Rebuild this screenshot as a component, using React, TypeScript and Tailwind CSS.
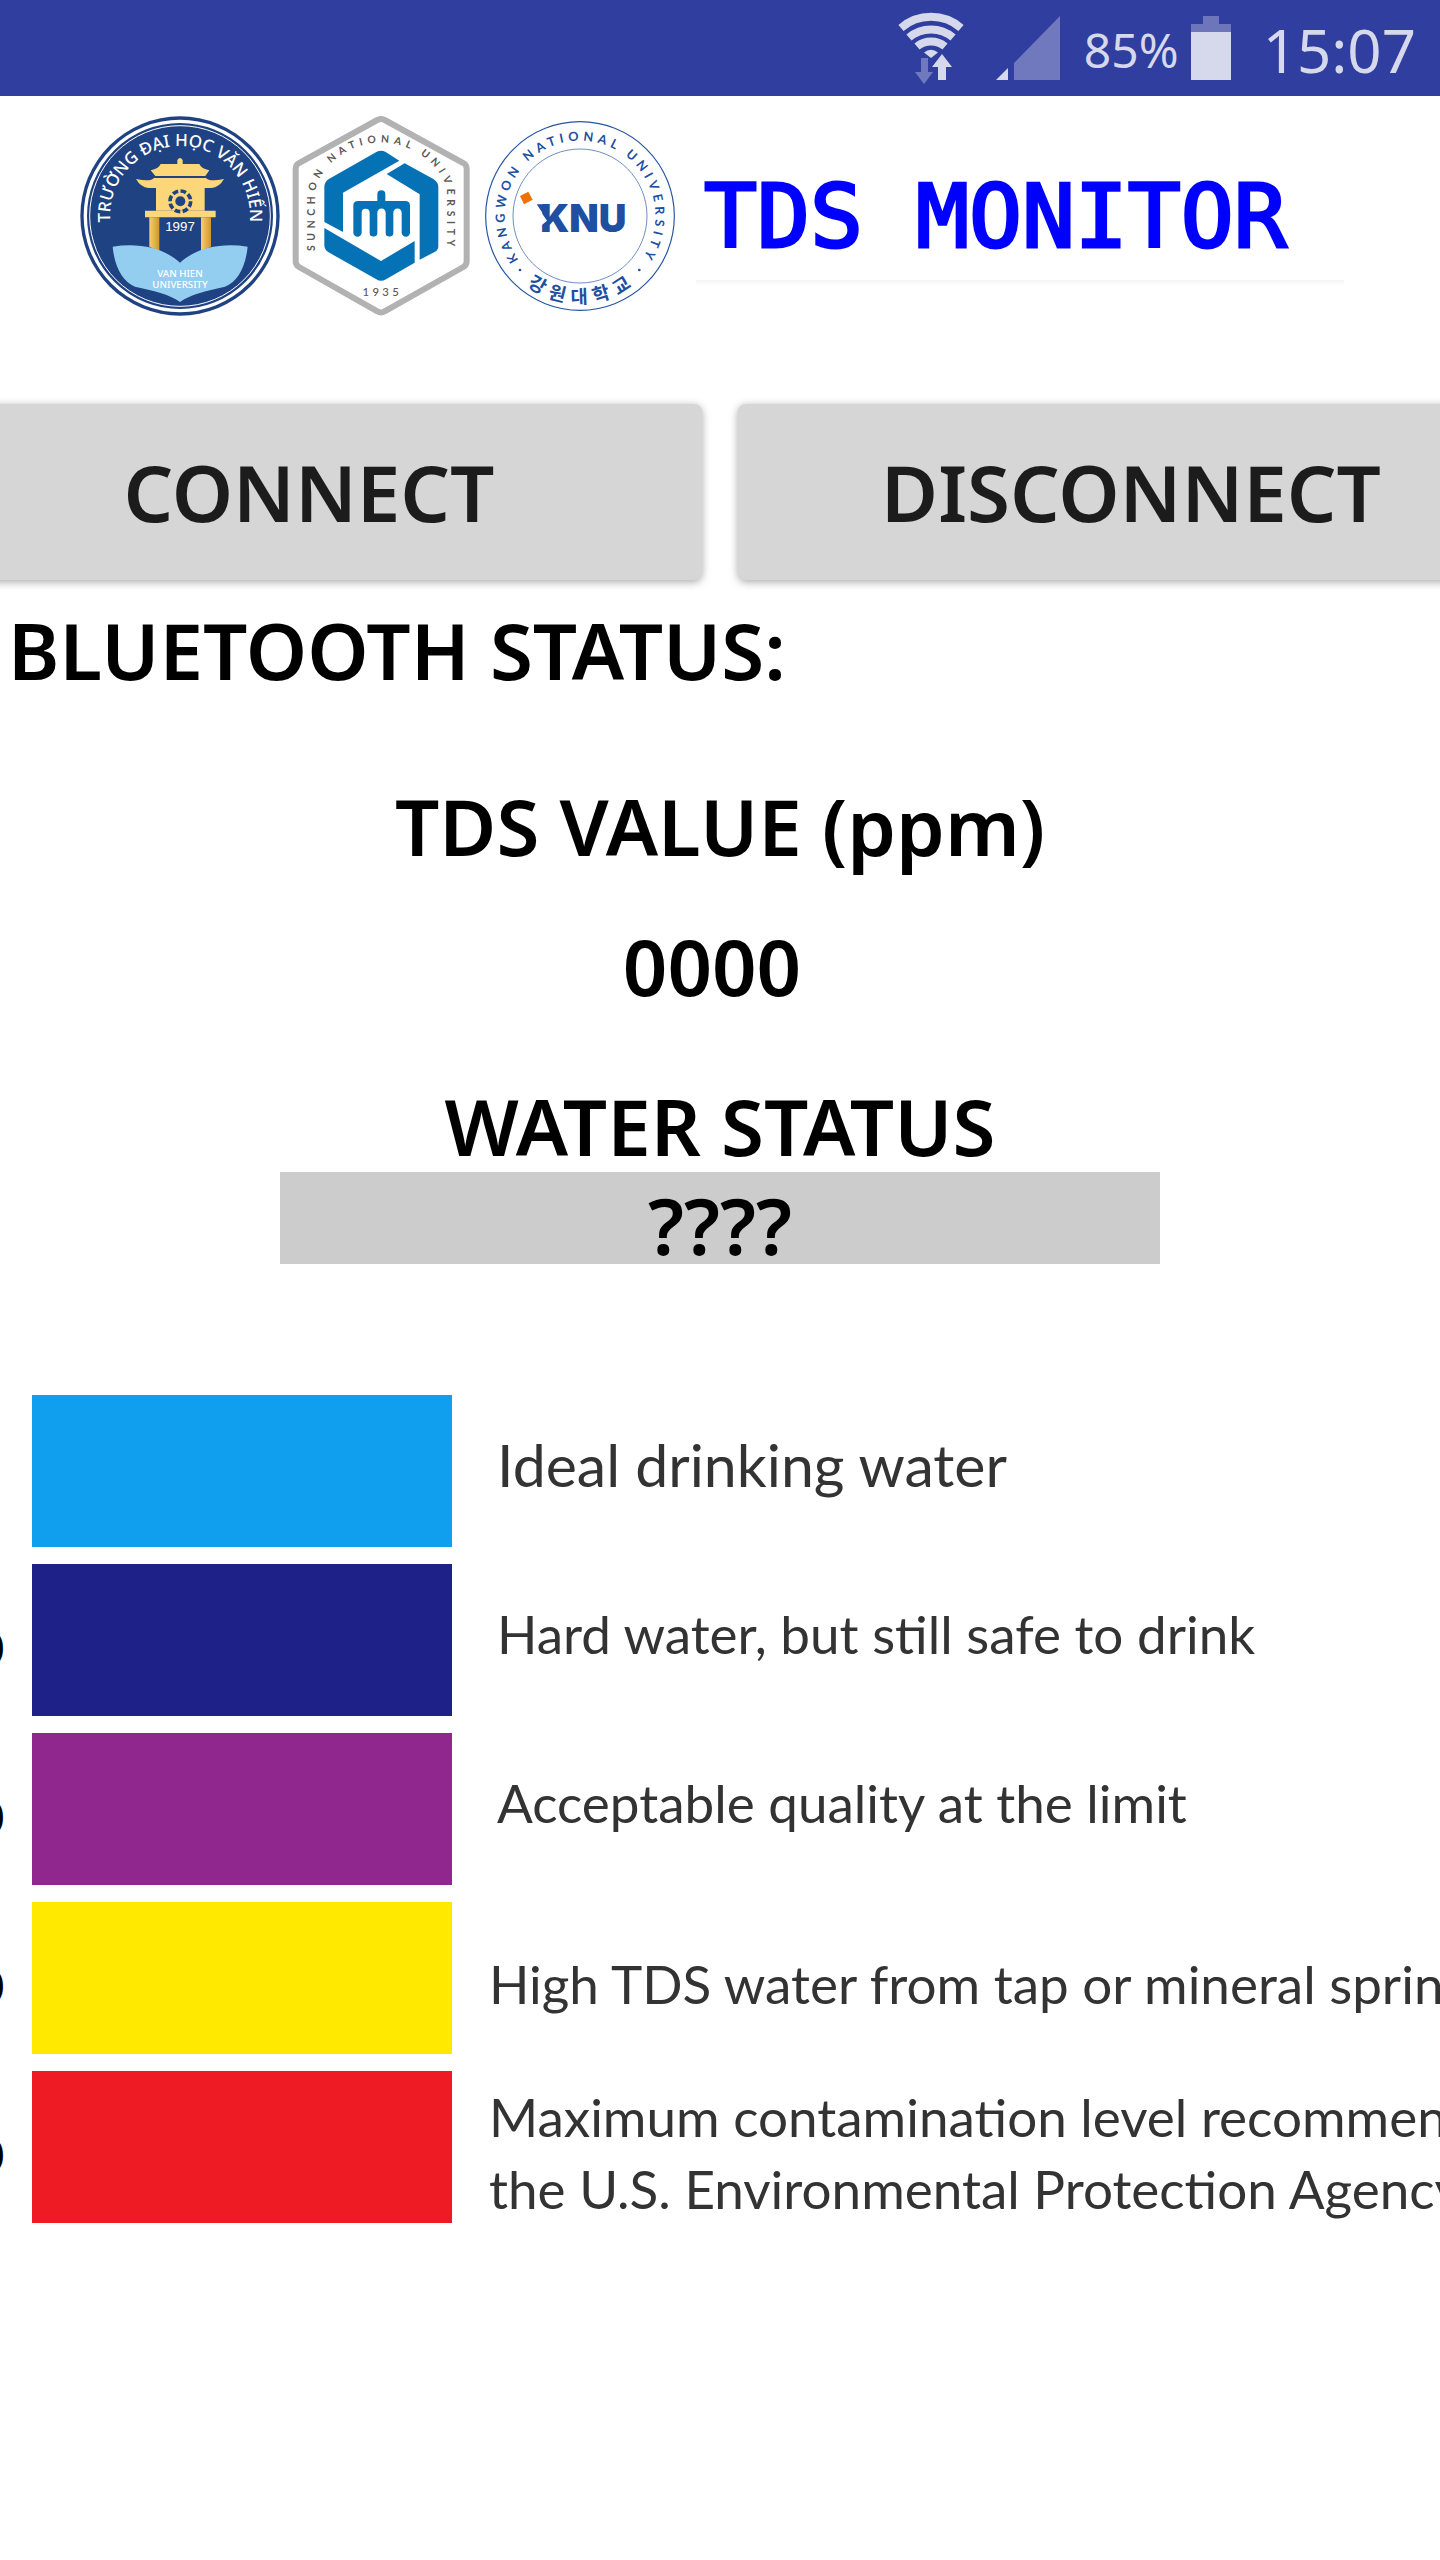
import type { ReactNode } from 'react';

const NOTO = "font-['Noto_Sans',sans-serif]";

function WifiIcon() {
  return (
    <svg className="h-[75px] w-[66px]" viewBox="897 10 66 75" fill="none" aria-hidden="true">
      <g stroke="#d6d9ec" strokeWidth="8">
        <path d="M900 27A46 46 0 0 1 960 27" />
        <path d="M908 36.500A34 34 0 0 1 952 36.500" />
        <path d="M916 45.500A22 22 0 0 1 944 45.500" />
      </g>
      <path d="M923 51.500Q930 46 937 51.500L930 57Z" fill="#d6d9ec" />
      <path d="M920 57h7v14h5l-9 12l-9-12h6z" fill="#7079bd" />
      <path d="M941 53l10 13h-6v13h-8V66h-6z" fill="#d6d9ec" />
    </svg>
  );
}

function SignalIcon() {
  return (
    <svg className="h-16 w-16" viewBox="994 16 64 64" aria-hidden="true">
      <path d="M994 80h12V68z" fill="#d6d9ec" />
      <path d="M1012 80V63l46-47v64z" fill="#7079bd" />
    </svg>
  );
}

function BatteryIcon() {
  return (
    <svg className="h-16 w-10" viewBox="0 0 40 64" aria-hidden="true">
      <path d="M0 16V8h12V0h16v8h12v8z" fill="#6d76bb" />
      <path d="M0 16h40v48H0z" fill="#d6d9ec" />
    </svg>
  );
}

function VanHienLogo() {
  return (
    <svg className="size-[200px] shrink-0" viewBox="30 48 600 600" role="img" aria-label="Van Hien University">
      <defs>
        <path id="vh-arc" d="M330 558A210 210 0 1 1 330.100 558" />
        <linearGradient id="vh-gold" x1="0" x2="1" y1="0" y2="0">
          <stop offset="0" stopColor="#f6cf6c" />
          <stop offset="1" stopColor="#cf962f" />
        </linearGradient>
      </defs>
      <circle cx="330" cy="348" r="299" fill="#1f4283" />
      <circle cx="330" cy="348" r="284" fill="none" stroke="#fff" strokeWidth="10" />
      <circle cx="330" cy="348" r="271" fill="none" stroke="#fff" strokeWidth="3" />
      <text fill="#fff" className="font-['Noto_Sans',sans-serif] text-[51px] font-medium" textAnchor="middle">
        <textPath href="#vh-arc" startOffset="50%">TRƯỜNG ĐẠI HỌC VĂN HIẾN</textPath>
      </text>
      <g fill="#fbd779">
        <path d="M322 192V180Q330 168 338 180V192H388Q394 206 418 211L406 228H256L242 211Q266 206 272 192Z" />
        <path d="M252 234H408Q418 246 462 237Q448 262 424 264H404V332H258V264H236Q212 262 198 237Q242 246 252 234Z" />
        <path d="M225 332H437V352H225Z" />
      </g>
      <path d="M238 352h30v100l-30-12z" fill="url(#vh-gold)" />
      <path d="M393 352h30v88l-30 12z" fill="url(#vh-gold)" />
      <circle cx="331" cy="304" r="31" fill="none" stroke="#1f4283" strokeWidth="11" strokeDasharray="17 7.300" />
      <circle cx="331" cy="304" r="15" fill="#1f4283" />
      <path
        d="M128 440C205 428 280 442 330 488C380 442 455 428 533 440C526 505 502 545 465 560C412 572 362 582 330 606C298 582 250 572 195 560C160 545 134 505 128 440Z"
        fill="#93cdef"
      />
      <g fill="#fff" textAnchor="middle">
        <text x="330" y="393" className="font-['Liberation_Sans',sans-serif] text-[40px] font-normal">1997</text>
        <text x="330" y="530" className="font-['Noto_Sans',sans-serif] text-[29px] font-medium">VAN HIEN</text>
        <text x="330" y="565" className="font-['Noto_Sans',sans-serif] text-[29px] font-medium">UNIVERSITY</text>
      </g>
    </svg>
  );
}

function SunchonLogo() {
  return (
    <svg className="h-[200px] w-[178px] shrink-0" viewBox="34 48 534 600" role="img" aria-label="Sunchon National University">
      <defs>
        <path id="su-arc" d="M103 484V280C108 215 190 128 301 128C412 128 495 215 500 280V484" />
      </defs>
      <path
        d="M290 60Q301 54 312 60L548 189Q558 195 558 206V484Q558 495 548 501L312 634Q301 641 290 634L55 501Q45 495 45 484V206Q45 195 55 189Z"
        fill="#fff"
        stroke="#b2b2b2"
        strokeWidth="18"
      />
      <g fill="#0672b6">
        <path d="M287 156Q301 148 315 156L356 182L187 278V396L131 366V262Q131 244 146 236Z" />
        <path d="M372 190L458 237Q473 246 473 262V438Q473 450 462 456L417 479V283L318 222Z" />
        <path d="M131 384L301 483L402 423V488L316 538Q301 547 287 538L144 457Q131 450 131 436Z" />
        <path d="M290 303V283A12 12 0 0 1 314 283V303H374Q388 303 388 317V398A12.500 12.500 0 0 1 363 398V338A12.500 12.500 0 0 0 338 338V398A11.500 11.500 0 0 1 315 398V338A12.500 12.500 0 0 0 290 338V398A11.500 11.500 0 0 1 267 398V338A12 12 0 0 0 243 338V398A12.500 12.500 0 0 1 218 398V317Q218 303 232 303Z" />
      </g>
      <text fill="#5b5657" className="font-['Lato',sans-serif] text-[31px] font-bold tracking-[14px]" textAnchor="middle">
        <textPath href="#su-arc" startOffset="50%">SUNCHON NATIONAL UNIVERSITY</textPath>
      </text>
      <text x="305" y="588" fill="#5b5657" className="font-['Lato',sans-serif] text-[34px] font-medium tracking-[10px]" textAnchor="middle">
        1935
      </text>
    </svg>
  );
}

function KangwonLogo() {
  return (
    <svg className="size-[196px] shrink-0" viewBox="21 54 588 588" role="img" aria-label="Kangwon National University">
      <defs>
        <path id="kn-arc" d="M315 574A226 226 0 1 1 315.100 574" />
        <path id="kn-base" d="M53 348A262 262 0 0 0 577 348" />
      </defs>
      <circle cx="315" cy="348" r="283" fill="#fff" stroke="#2454a2" strokeWidth="3.500" />
      <circle cx="315" cy="348" r="201" fill="none" stroke="#2454a2" strokeWidth="2" />
      <g fill="#1e4fa1">
        <text className="font-['Lato',sans-serif] text-[38px] font-bold tracking-[13px]" textAnchor="middle">
          <textPath href="#kn-arc" startOffset="50%">KANGWON NATIONAL UNIVERSITY</textPath>
        </text>
        <text className="font-['Noto_Sans_CJK_KR',sans-serif] text-[56px] font-bold tracking-[20px]" textAnchor="middle">
          <textPath href="#kn-base" startOffset="51%">강원대학교</textPath>
        </text>
        <circle cx="135" cy="510" r="4" />
        <circle cx="493" cy="510" r="4" />
        <text x="325" y="396" className="font-['Inter',sans-serif] text-[115px] font-black" textAnchor="middle">
          KNU
        </text>
      </g>
      <path d="M180 310L216 362L180 392Z" fill="#fff" />
      <path d="M185 313H207V345Z" fill="#1e4fa1" />
      <path d="M135 288L160 275L173 299L147 313Z" fill="#ee7203" />
    </svg>
  );
}

function ActionButton({ children }: { children: ReactNode }) {
  return (
    <button
      type="button"
      className="flex h-[176px] items-center justify-center rounded-lg bg-[#d6d6d6] text-[#1c1c1c] shadow-[0_2px_8px_rgba(0,0,0,0.35)]"
    >
      {children}
    </button>
  );
}

const UPPER = 'pl-2 pb-3';
const LOWER = 'pt-3';

const levels = [
  { swatch: 'bg-[#0f9fee]', edge: '', place: UPPER, size: 'text-[59px]', lines: ['Ideal drinking water'] },
  { swatch: 'bg-[#1e2188]', edge: '0', place: UPPER, size: 'text-[53px]', lines: ['Hard water, but still safe to drink'] },
  { swatch: 'bg-[#90278f]', edge: '0', place: UPPER, size: 'text-[53px]', lines: ['Acceptable quality at the limit'] },
  { swatch: 'bg-[#ffe900]', edge: '0', place: LOWER, size: 'text-[53px]', lines: ['High TDS water from tap or mineral springs'] },
  {
    swatch: 'bg-[#ee1b24]',
    edge: '0',
    place: LOWER,
    size: 'text-[53px]',
    lines: ['Maximum contamination level recommended by', 'the U.S. Environmental Protection Agency'],
  },
];

export default function App() {
  return (
    <div className={`min-h-screen overflow-hidden bg-white ${NOTO} text-[78px] leading-[80px] font-semibold text-black`}>
      <div className="flex h-24 items-center justify-end bg-[#303f9f] pr-6 font-normal text-[#d6d9ec]">
        <WifiIcon />
        <span className="mr-6 ml-8">
          <SignalIcon />
        </span>
        <span className="mr-3 pt-1 text-[48px]">85%</span>
        <BatteryIcon />
        <span className="ml-8 pt-1 text-[60px]">15:07</span>
      </div>

      <header className="flex items-center gap-3 pt-5 pl-20">
        <VanHienLogo />
        <SunchonLogo />
        <KangwonLogo />
        <div className="ml-1.5 w-[648px]">
          <h1 className="pt-2 pl-2 font-['DejaVu_Sans_Mono',monospace] text-[88px] leading-[126px] font-normal whitespace-nowrap text-[#0000ff] [-webkit-text-stroke:3px_#0000ff]">
            TDS MONITOR
          </h1>
          <div className="h-1.5 bg-linear-to-b from-[#f5f5f5] to-white" />
        </div>
      </header>

      <main>
        <div className="-mx-[84px] mt-[88px] grid grid-cols-2 gap-9">
          <ActionButton>CONNECT</ActionButton>
          <ActionButton>DISCONNECT</ActionButton>
        </div>

        <p className="mt-[30px] pl-2">BLUETOOTH STATUS:</p>

        <section className="mt-24 text-center">
          <h2>TDS VALUE (ppm)</h2>
          <p className="mt-[60px] pr-4">0000</p>
        </section>

        <section className="mt-20 text-center">
          <h2>WATER STATUS</h2>
          <p className="mx-[280px] mt-1.5 bg-[#cccccc] pt-3.5 leading-[78px]">????</p>
        </section>

        <ul className="mt-[131px] flex flex-col gap-[17px] overflow-hidden font-['Lato',sans-serif] font-normal text-[#333333]">
          {levels.map((level) => (
            <li key={level.lines[0]} className="flex h-[152px] items-center">
              <span className="flex w-8 shrink-0">
                <span className="flex w-1 justify-end overflow-hidden pt-4 text-[48px] leading-[60px] font-bold text-black">
                  {level.edge}
                </span>
              </span>
              <span className={`h-full w-[420px] shrink-0 ${level.swatch}`} />
              <span className={`ml-[37px] flex flex-col leading-[72px] whitespace-nowrap ${level.place} ${level.size}`}>
                {level.lines.map((line) => (
                  <span key={line}>{line}</span>
                ))}
              </span>
            </li>
          ))}
        </ul>
      </main>
    </div>
  );
}
